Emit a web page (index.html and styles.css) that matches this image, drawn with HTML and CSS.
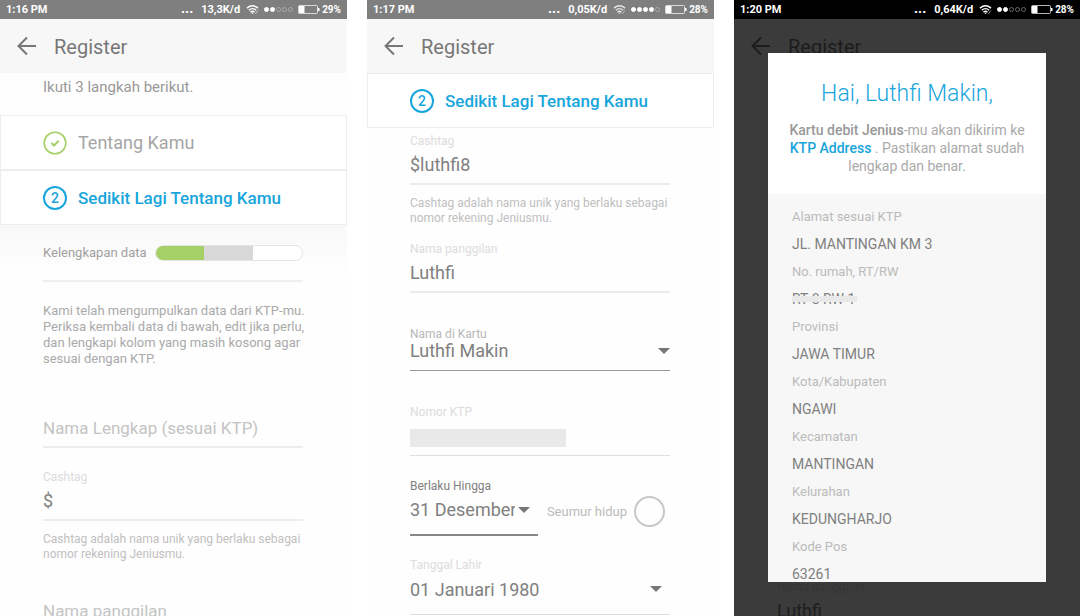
FILE: index.html
```
<!DOCTYPE html>
<html lang="id">
<head>
  <meta charset="UTF-8">
  <meta name="viewport" content="width=device-width, initial-scale=1">
  <title>Register</title>
  <link rel="stylesheet" href="styles.css">
</head>
<body>
  <!-- shared icons -->
  <svg class="icon-defs" aria-hidden="true">
    <symbol id="icon-back" viewBox="0 0 20 20">
      <path d="M19 10H2M10 1.500L1.500 10l8.500 8.500" fill="none" stroke="currentColor" stroke-width="2"/>
    </symbol>
    <symbol id="icon-wifi" viewBox="0 0 14 12">
      <g fill="none" stroke="currentColor" stroke-width="1.500">
        <path d="M1 4.500Q7-.5 13 4.500"/>
        <path d="M3 6.800Q7 3.300 11 6.800"/>
        <path d="M4.800 9Q7 7 9.200 9"/>
      </g>
      <path d="M5.800 9.800Q7 9 8.200 9.800L7 11z" fill="currentColor"/>
      <path d="M10 11l3-4" stroke="currentColor" stroke-width="1" opacity=".6"/>
    </symbol>
    <symbol id="icon-battery" viewBox="0 0 22 9">
      <rect x=".5" y=".5" width="19" height="8" rx="1" fill="none" stroke="currentColor" stroke-width="1" opacity=".7"/>
      <rect x="1" y="1" width="5.500" height="7" fill="currentColor"/>
      <rect x="20" y="3" width="1.500" height="3" fill="currentColor"/>
    </symbol>
  </svg>

  <main class="screens">

    <section class="phone">
      <div class="status-bar">
        <span class="clock">1:16 PM</span>
        <span class="more">...</span>
        <span class="speed">13,3K/d</span>
        <svg class="wifi"><use href="#icon-wifi"/></svg>
        <span class="signal"><i class="on"></i><i class="on"></i><i></i><i></i><i></i></span>
        <svg class="battery"><use href="#icon-battery"/></svg>
        <span class="percent">29%</span>
      </div>
      <header class="app-bar">
        <button class="back" aria-label="Kembali"><svg><use href="#icon-back"/></svg></button>
        <h1>Register</h1>
      </header>
      <p class="intro">Ikuti 3 langkah berikut.</p>
      <div class="step done">
        <svg class="step-icon" viewBox="0 0 24 24" fill="none" stroke="currentColor">
          <circle cx="12" cy="12" r="10.800" stroke-width="1.600"/>
          <path d="M8.500 12l2.500 2.500 4.700-4.700" stroke-width="2"/>
        </svg>
        <h2>Tentang Kamu</h2>
      </div>
      <div class="step current">
        <span class="step-number">2</span>
        <h2>Sedikit Lagi Tentang Kamu</h2>
      </div>
      <form class="form form-shaded">
        <div class="completeness">
          <span>Kelengkapan data</span>
          <div class="meter"><i class="filled"></i><i class="pending"></i><i></i></div>
        </div>
        <p class="note">Kami telah mengumpulkan data dari KTP-mu. Periksa kembali data di bawah, edit jika perlu, dan lengkapi kolom yang masih kosong agar sesuai dengan KTP.</p>
        <div class="field">
          <input type="text" placeholder="Nama Lengkap (sesuai KTP)" aria-label="Nama Lengkap (sesuai KTP)">
        </div>
        <div class="field field-next">
          <label for="cashtag-empty">Cashtag</label>
          <input type="text" id="cashtag-empty" value="$">
          <p class="help">Cashtag adalah nama unik yang berlaku sebagai nomor rekening Jeniusmu.</p>
        </div>
        <div class="field field-far">
          <input type="text" placeholder="Nama panggilan" aria-label="Nama panggilan">
        </div>
      </form>
    </section>

    <section class="phone">
      <div class="status-bar">
        <span class="clock">1:17 PM</span>
        <span class="more">...</span>
        <span class="speed">0,05K/d</span>
        <svg class="wifi weak"><use href="#icon-wifi"/></svg>
        <span class="signal"><i class="on"></i><i class="on"></i><i class="on"></i><i class="on"></i><i></i></span>
        <svg class="battery"><use href="#icon-battery"/></svg>
        <span class="percent">28%</span>
      </div>
      <header class="app-bar">
        <button class="back" aria-label="Kembali"><svg><use href="#icon-back"/></svg></button>
        <h1>Register</h1>
      </header>
      <div class="step current">
        <span class="step-number">2</span>
        <h2>Sedikit Lagi Tentang Kamu</h2>
      </div>
      <form class="form form-scrolled">
        <div class="field">
          <label for="cashtag">Cashtag</label>
          <input type="text" id="cashtag" value="$luthfi8">
          <p class="help">Cashtag adalah nama unik yang berlaku sebagai nomor rekening Jeniusmu.</p>
        </div>
        <div class="field field-close">
          <label for="nickname">Nama panggilan</label>
          <input type="text" id="nickname" value="Luthfi">
        </div>
        <div class="field field-far card-name">
          <label for="card-name">Nama di Kartu</label>
          <div class="select-box">
            <select id="card-name"><option>Luthfi Makin</option></select>
            <span class="caret"></span>
          </div>
        </div>
        <div class="field field-far">
          <span class="label">Nomor KTP</span>
          <div class="hidden-value"><span></span></div>
        </div>
        <div class="validity">
          <div class="field valid-until">
            <label for="valid-until">Berlaku Hingga</label>
            <div class="select-box tall">
              <select id="valid-until"><option>31 Desember 2017</option></select>
              <span class="caret"></span>
            </div>
          </div>
          <div class="lifetime">
            <label for="lifetime">Seumur hidup</label>
            <input type="checkbox" id="lifetime">
          </div>
        </div>
        <div class="field field-next birth-date">
          <label for="birth-date">Tanggal Lahir</label>
          <div class="select-box tall">
            <select id="birth-date"><option>01 Januari 1980</option></select>
            <span class="caret"></span>
          </div>
        </div>
      </form>
    </section>

    <section class="phone phone-dimmed">
      <div class="status-bar">
        <span class="clock">1:20 PM</span>
        <span class="more">...</span>
        <span class="speed">0,64K/d</span>
        <svg class="wifi"><use href="#icon-wifi"/></svg>
        <span class="signal"><i class="on"></i><i class="on"></i><i></i><i></i><i></i></span>
        <svg class="battery"><use href="#icon-battery"/></svg>
        <span class="percent">28%</span>
      </div>
      <div class="backdrop-page">
        <header class="app-bar">
          <button class="back" aria-label="Kembali"><svg><use href="#icon-back"/></svg></button>
          <h1>Register</h1>
        </header>
        <div class="intro"></div>
        <div class="step"></div>
        <div class="step"></div>
        <form class="form form-bottom">
          <div class="field">
            <label for="nickname-back">Nama panggilan</label>
            <input type="text" id="nickname-back" value="Luthfi">
          </div>
        </form>
      </div>
      <div class="overlay">
        <div class="dialog" role="dialog" aria-labelledby="dialog-title">
          <div class="dialog-head">
            <h2 id="dialog-title">Hai, Luthfi Makin,</h2>
            <p><b>Kartu debit Jenius</b>-mu akan dikirim ke <a href="#">KTP Address</a> . Pastikan alamat sudah lengkap dan benar.</p>
          </div>
          <dl class="address">
            <dt>Alamat sesuai KTP</dt>
            <dd>JL. MANTINGAN KM 3</dd>
            <dt>No. rumah, RT/RW</dt>
            <dd><span class="redacted">RT 8 RW 1</span></dd>
            <dt>Provinsi</dt>
            <dd>JAWA TIMUR</dd>
            <dt>Kota/Kabupaten</dt>
            <dd>NGAWI</dd>
            <dt>Kecamatan</dt>
            <dd>MANTINGAN</dd>
            <dt>Kelurahan</dt>
            <dd>KEDUNGHARJO</dd>
            <dt>Kode Pos</dt>
            <dd>63261</dd>
          </dl>
        </div>
      </div>
    </section>

  </main>
</body>
</html>
```
FILE: styles.css
```
* {
  box-sizing: border-box;
}
body {
  margin: 0;
  font-family: Roboto, sans-serif;
  color: #808080;
  background: #fff;
}
h1, h2, p, dl, dd {
  margin: 0;
  font-weight: normal;
}
.icon-defs {
  display: none;
}
.screens {
  display: grid;
  grid-template-columns: 347fr 347fr 346fr;
  gap: 20px;
  height: 100vh;
  overflow: hidden;
}
.phone {
  display: flex;
  flex-direction: column;
  min-width: 0;
  overflow: hidden;
  background: #fefefe;
}

/* Status bar */
.status-bar {
  flex: none;
  display: flex;
  align-items: center;
  height: 19px;
  padding: 0 6px;
  background: #7f7f7f;
  color: #fff;
  font-size: 11px;
  font-weight: bold;
}
.clock {
  flex: 1;
}
.more {
  padding-bottom: 4px;
  font-size: 14px;
  line-height: 12px;
  margin-right: 8px;
}
.wifi {
  width: 13px;
  height: 11px;
  margin: 0 5px 0 6px;
}
.wifi.weak {
  opacity: 0.8;
}
.signal {
  display: flex;
  gap: 1px;
}
.signal i {
  width: 5px;
  height: 5px;
  border: 1px solid #aaa;
  border-radius: 50%;
}
.signal .on {
  background: #fff;
  border-color: #fff;
}
.phone-dimmed .signal i:not(.on) {
  border-color: #666;
}
.battery {
  width: 22px;
  height: 9px;
  margin: 0 2px 0 5px;
}
.percent {
  font-size: 10px;
}

/* App bar */
.app-bar {
  flex: none;
  display: flex;
  align-items: center;
  height: 54px;
  padding: 0 17px;
  background: #f7f7f7;
}
.back {
  width: 20px;
  height: 20px;
  padding: 0;
  border: none;
  background: none;
  color: #777;
  cursor: pointer;
}
.back svg {
  display: block;
  width: 20px;
  height: 20px;
}
.app-bar h1 {
  margin-left: 17px;
  padding-top: 2px;
  font-size: 20px;
  color: #777;
}

/* Steps */
.intro {
  flex: none;
  height: 42px;
  padding-left: 43px;
  font-size: 15px;
  line-height: 28px;
  color: #999;
}
.step {
  flex: none;
  display: flex;
  align-items: center;
  gap: 11px;
  height: 55px;
  padding: 0 42px;
  border: 1px solid #ededed;
  background: #fff;
}
.step h2 {
  font-size: 18px;
  line-height: 24px;
  color: #a5a5a5;
}
.step-icon {
  width: 24px;
  height: 24px;
  color: #a5cf67;
}
.step-number {
  width: 24px;
  height: 24px;
  border: 2px solid #17a5db;
  border-radius: 50%;
  font-size: 14px;
  font-weight: 500;
  line-height: 20px;
  text-align: center;
}
.step.current,
.step.current h2 {
  color: #17a5db;
}
.step.current h2 {
  font-size: 17px;
  font-weight: 500;
}

/* Form */
.form {
  flex: 1;
  padding: 0 44px 0 43px;
}
.form-shaded {
  background: linear-gradient(#f8f8f8, #fefefe 48px);
}
.form-scrolled {
  padding-top: 5px;
}
.completeness {
  display: flex;
  align-items: center;
  gap: 8px;
  padding: 20px 0 19px;
  border-bottom: 2px solid #efefef;
  font-size: 13px;
  line-height: 16px;
  color: #a0a0a0;
}
.meter {
  flex: 1;
  display: flex;
  height: 16px;
  border: 1px solid #e5e5e5;
  border-radius: 8px;
  overflow: hidden;
  background: #fff;
}
.meter i {
  flex: 1;
}
.meter .filled {
  background: #a5cf67;
}
.meter .pending {
  background: #d8d8d8;
}
.note {
  margin: 21px -8px 45px 0;
  font-size: 13px;
  line-height: 16px;
  color: #aaa;
}
.field label,
.field .label {
  display: block;
  font-size: 12px;
  line-height: 16px;
  color: #dcdcdc;
}
.field input {
  display: block;
  width: 100%;
  height: 36px;
  padding: 0 0 3px;
  border: none;
  border-bottom: 2px solid #ececec;
  border-radius: 0;
  outline: none;
  background: none;
  font: 18px Roboto, sans-serif;
  color: #808080;
}
.field input::placeholder {
  font-size: 17px;
  color: #c4c4c4;
  opacity: 1;
}
.field-close {
  margin-top: 15px;
}
.field-next {
  margin-top: 21px;
}
.field-far {
  margin-top: 33px;
}
.help {
  margin-top: 11px;
  font-size: 12px;
  line-height: 15px;
  color: #c0c0c0;
}
.select-box {
  display: flex;
  align-items: center;
  height: 29px;
  padding-bottom: 11px;
  border-bottom: 1px solid #999;
}
.select-box.tall {
  height: 42px;
  padding-bottom: 9px;
}
.select-box select {
  flex: 1;
  min-width: 0;
  padding: 0;
  border: none;
  outline: none;
  appearance: none;
  background: none;
  font: 18px Roboto, sans-serif;
  color: #808080;
  text-overflow: clip;
}
.caret {
  border: 6px solid transparent;
  border-top-color: #777;
  border-bottom: none;
}
.card-name label {
  color: #b8b8b8;
}
.hidden-value {
  height: 36px;
  padding-top: 9px;
  border-bottom: 1px solid #e0e0e0;
}
.hidden-value span {
  display: block;
  width: 60%;
  height: 18px;
  background: #e9e9e9;
}
.validity {
  display: flex;
  align-items: flex-end;
  justify-content: space-between;
  margin-top: 22px;
}
.valid-until {
  width: 128px;
}
.valid-until label {
  color: #808080;
}
.valid-until .select-box {
  padding-right: 8px;
  border-bottom: 2px solid #888;
}
.valid-until .caret {
  margin-left: 3px;
}
.lifetime {
  display: flex;
  align-items: center;
  gap: 7px;
  padding: 0 5px 9px 0;
  font-size: 13px;
  color: #bbb;
}
.lifetime input {
  width: 31px;
  height: 31px;
  margin: 0;
  appearance: none;
  border: 2px solid #c8c8c8;
  border-radius: 50%;
}
.birth-date .select-box {
  padding-right: 8px;
  border-color: #ddd;
}

/* Address dialog */
.phone-dimmed {
  position: relative;
  background: #f7f7f7;
}
.phone-dimmed .status-bar {
  background: #000;
}
.backdrop-page {
  flex: 1;
  display: flex;
  flex-direction: column;
  min-height: 0;
}
.backdrop-page .step {
  background: none;
}
.form-bottom {
  display: flex;
  flex-direction: column;
  justify-content: flex-end;
}
.form-bottom .field {
  margin-bottom: -15px;
}
.overlay {
  position: absolute;
  inset: 19px 0 0;
  padding: 34px;
  background: rgba(0, 0, 0, 0.76);
}
.dialog {
  display: flex;
  flex-direction: column;
  height: 100%;
  overflow: hidden;
  background: #f7f7f7;
}
.dialog-head {
  flex: none;
  padding: 25px 18px 19px;
  background: #fff;
  text-align: center;
}
.dialog-head h2 {
  margin-bottom: 11px;
  font-size: 23px;
  font-weight: 300;
  line-height: 32px;
  color: #17a5db;
}
.dialog-head p {
  font-size: 14px;
  line-height: 18px;
  color: #aaa;
}
.dialog-head b {
  font-weight: 500;
  color: #999;
}
.dialog-head a {
  font-weight: 500;
  color: #17a5db;
  text-decoration: none;
}
.address {
  padding: 9px 24px 0;
}
.address dt {
  font-size: 13px;
  line-height: 27px;
  color: #bbb;
}
.address dd {
  font-size: 14px;
  line-height: 28px;
  color: #808080;
}
.redacted {
  position: relative;
}
.redacted::after {
  content: "";
  position: absolute;
  inset: 5px -2px 5px 0;
  background: #e9e9e9;
}
```
